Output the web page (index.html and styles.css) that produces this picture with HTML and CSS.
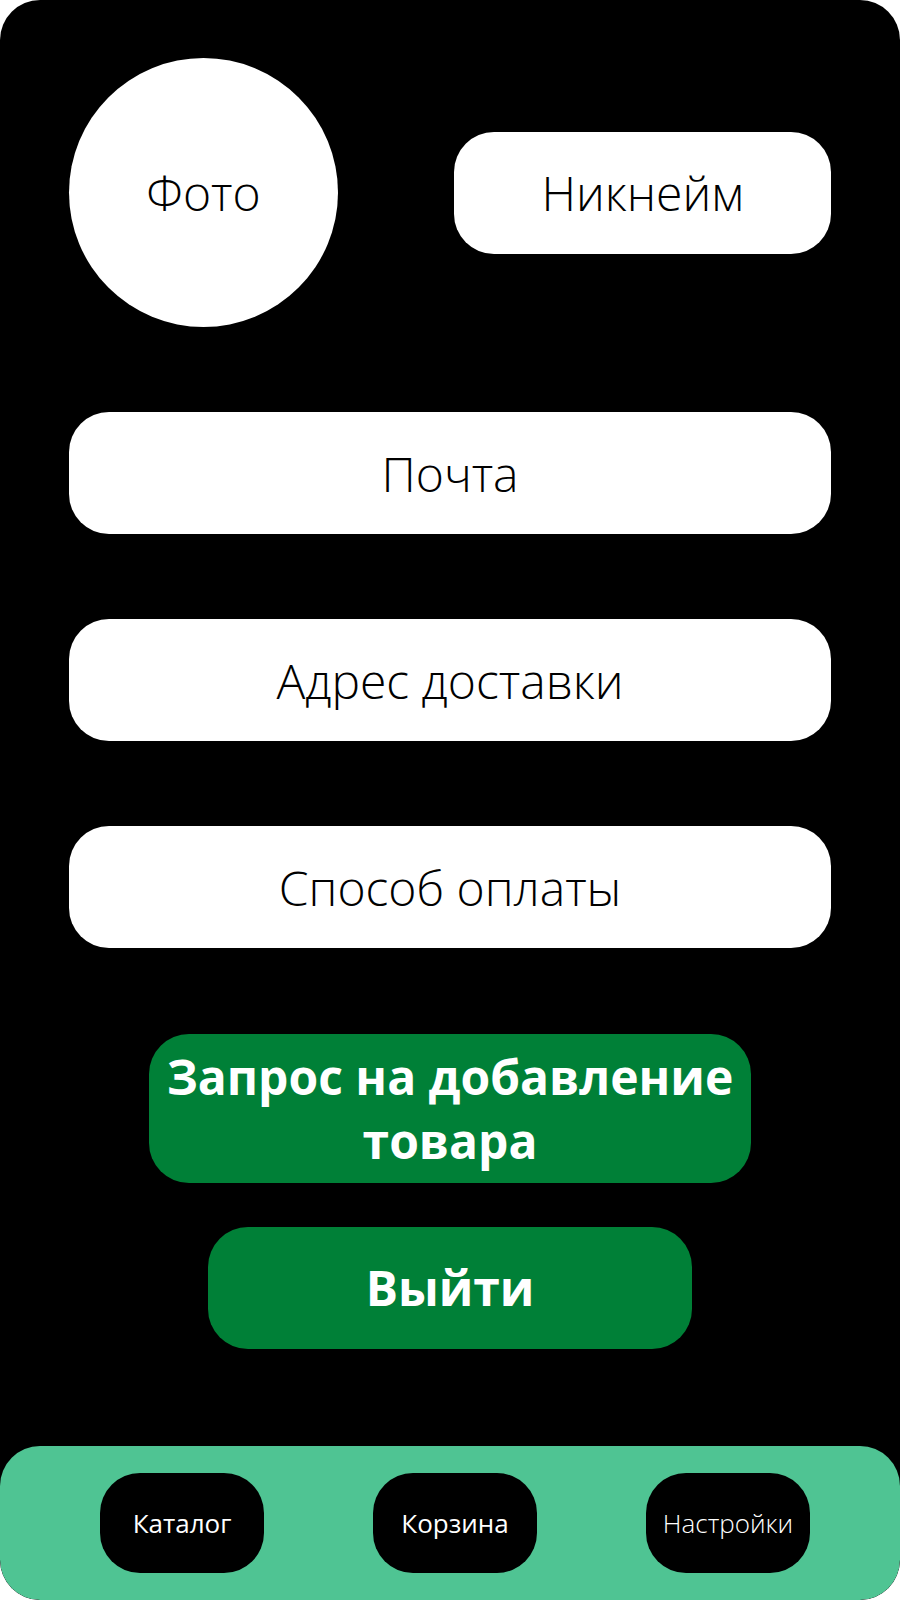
FILE: index.html
```html
<!DOCTYPE html>
<html lang="ru">
<head>
<meta charset="utf-8">
<title>Профиль</title>
<link rel="stylesheet" href="styles.css">
</head>
<body>
<div class="screen">
  <main class="content">
    <div class="top-row">
      <div class="photo">Фото</div>
      <div class="field nick">Никнейм</div>
    </div>
    <div class="fields">
      <div class="field wide">Почта</div>
      <div class="field wide">Адрес доставки</div>
      <div class="field wide">Способ оплаты</div>
    </div>
    <div class="actions">
      <button class="btn request">Запрос на добавление<br>товара</button>
      <button class="btn logout">Выйти</button>
    </div>
  </main>
  <nav class="tabbar">
    <a class="tab">Каталог</a>
    <a class="tab">Корзина</a>
    <a class="tab light">Настройки</a>
  </nav>
</div>
</body>
</html>
```

FILE: styles.css
```css
html, body {
  margin: 0;
  padding: 0;
  background: #ffffff;
}

.screen {
  width: 900px;
  height: 1600px;
  background: #000000;
  border-radius: 40px;
  overflow: hidden;
  display: flex;
  flex-direction: column;
  font-family: "Open Sans", "Noto Sans", sans-serif;
}

.content {
  flex: 1;
  padding: 58px 69px 0 69px;
  display: flex;
  flex-direction: column;
}

.top-row {
  display: flex;
  align-items: center;
  justify-content: space-between;
}

.photo {
  width: 269px;
  height: 269px;
  border-radius: 50%;
  background: #ffffff;
  color: #000000;
  display: flex;
  align-items: center;
  justify-content: center;
  font-weight: 300;
  font-size: 48px;
}

.field {
  background: #ffffff;
  color: #000000;
  height: 122px;
  border-radius: 40px;
  display: flex;
  align-items: center;
  justify-content: center;
  font-weight: 300;
  font-size: 48px;
}

.nick {
  width: 377px;
}

.fields {
  margin-top: 85px;
  display: flex;
  flex-direction: column;
  gap: 85px;
}

.actions {
  margin-top: 86px;
  display: flex;
  flex-direction: column;
  align-items: center;
  gap: 44px;
}

.btn {
  border: none;
  background: #008037;
  color: #ffffff;
  font-family: "Open Sans", "Noto Sans", sans-serif;
  font-weight: 700;
  font-size: 48px;
  line-height: 64px;
  border-radius: 40px;
  padding: 0;
  display: flex;
  align-items: center;
  justify-content: center;
  text-align: center;
}

.request {
  width: 602px;
  height: 149px;
}

.logout {
  width: 484px;
  height: 122px;
}

.tabbar {
  height: 154px;
  background: #4fc493;
  border-radius: 40px;
  display: flex;
  align-items: center;
  padding-left: 100px;
  gap: 109px;
  box-sizing: border-box;
}

.tab {
  width: 164px;
  height: 100px;
  border-radius: 40px;
  background: #000000;
  color: #ffffff;
  display: flex;
  align-items: center;
  justify-content: center;
  font-size: 26px;
  font-weight: 400;
}

.tab.light {
  font-weight: 300;
}
```
